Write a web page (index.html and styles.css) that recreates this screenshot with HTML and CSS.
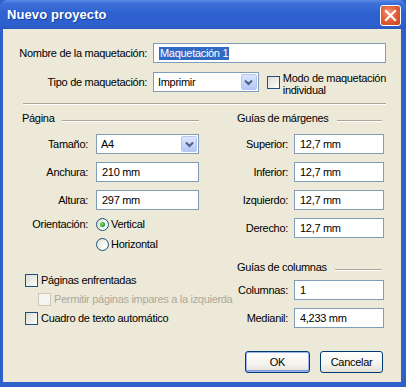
FILE: index.html
```html
<!DOCTYPE html>
<html lang="es">
<head>
<meta charset="utf-8">
<title>Nuevo proyecto</title>
<link rel="stylesheet" href="styles.css">
</head>
<body>
<div class="window">
  <div class="titlebar">
    <span class="title">Nuevo proyecto</span>
    <span class="close">
      <svg width="13" height="13" viewBox="0 0 13 13"><path d="M2 2 L11 11 M11 2 L2 11" stroke="#fff" stroke-width="2.2" stroke-linecap="square" fill="none"/></svg>
    </span>
  </div>
  <div class="client">
    <div class="top">
      <span class="lbl">Nombre de la maquetación:</span>
      <div class="field wide"><span class="hl">Maquetación 1</span></div>
      <span class="lbl">Tipo de maquetación:</span>
      <div class="row2">
        <div class="select sel-type"><span class="val">Imprimir</span><span class="dd"><svg width="9" height="7" viewBox="0 0 9 7"><path d="M1 1.5 L4.5 5 L8 1.5" stroke="#4d6185" stroke-width="2" fill="none"/></svg></span></div>
        <div class="check top-check"><span class="box"></span><span class="ctext">Modo de maquetación<br>individual</span></div>
      </div>
    </div>
    <div class="sep"></div>
    <div class="cols">
      <div class="left">
        <div class="ghead left-head"><span>Página</span><span class="gline"></span></div>
        <div class="frow"><span class="flbl">Tamaño:</span><div class="select sel-size"><span class="val">A4</span><span class="dd"><svg width="9" height="7" viewBox="0 0 9 7"><path d="M1 1.5 L4.5 5 L8 1.5" stroke="#4d6185" stroke-width="2" fill="none"/></svg></span></div></div>
        <div class="frow"><span class="flbl">Anchura:</span><div class="field w103">210 mm</div></div>
        <div class="frow"><span class="flbl">Altura:</span><div class="field w103">297 mm</div></div>
        <div class="rrow first"><span class="flbl">Orientación:</span><span class="radio on"></span><span class="rtext">Vertical</span></div>
        <div class="rrow"><span class="flbl"></span><span class="radio"></span><span class="rtext">Horizontal</span></div>
        <div class="crow c1"><span class="box"></span><span class="ctext">Páginas enfrentadas</span></div>
        <div class="crow c2 disabled"><span class="box"></span><span class="ctext">Permitir páginas impares a la izquierda</span></div>
        <div class="crow c3"><span class="box"></span><span class="ctext">Cuadro de texto automático</span></div>
      </div>
      <div class="right">
        <div class="ghead right-head"><span>Guías de márgenes</span><span class="gline"></span></div>
        <div class="frow"><span class="rlbl">Superior:</span><div class="field w90">12,7 mm</div></div>
        <div class="frow"><span class="rlbl">Inferior:</span><div class="field w90">12,7 mm</div></div>
        <div class="frow"><span class="rlbl">Izquierdo:</span><div class="field w90">12,7 mm</div></div>
        <div class="frow"><span class="rlbl">Derecho:</span><div class="field w90">12,7 mm</div></div>
        <div class="ghead right-head second"><span>Guías de columnas</span><span class="gline"></span></div>
        <div class="frow"><span class="rlbl">Columnas:</span><div class="field w90">1</div></div>
        <div class="frow"><span class="rlbl">Medianil:</span><div class="field w90">4,233 mm</div></div>
      </div>
    </div>
    <div class="buttons">
      <div class="btn default"><span>OK</span></div>
      <div class="btn cancel"><span>Cancelar</span></div>
    </div>
  </div>
</div>
</body>
</html>
```
FILE: styles.css
```css
html, body {
  margin: 0;
  padding: 0;
  width: 406px;
  height: 387px;
  overflow: hidden;
}
body {
  font-family: "Liberation Sans", Arial, sans-serif;
  font-size: 11px;
  letter-spacing: -0.3px;
  color: #000;
  white-space: nowrap;
}
.window {
  width: 406px;
  height: 387px;
  background: #2f5fc9;
  display: flex;
  flex-direction: column;
}
.titlebar {
  height: 29px;
  flex: none;
  display: flex;
  align-items: center;
  justify-content: space-between;
  background: linear-gradient(to bottom, #5a8ae6 0%, #3b6fd8 12%, #2f62d0 45%, #2d60ce 85%, #2a59c0 100%);
  border-radius: 7px 7px 0 0;
  padding: 0 5px 0 7px;
  box-sizing: border-box;
}
.title {
  color: #fff;
  font-weight: bold;
  font-size: 13px;
  letter-spacing: 0.1px;
  text-shadow: 1px 1px 0 #1a3f99;
}
.close {
  width: 21px;
  height: 21px;
  box-sizing: border-box;
  border: 1px solid #fff;
  border-radius: 3px;
  background: radial-gradient(circle at 40% 35%, #f29b7d 0%, #e0603a 45%, #c9431f 100%);
  display: flex;
  align-items: center;
  justify-content: center;
  margin-top: 1px;
}
.client {
  flex: 1;
  margin: 0 5px 5px 3px;
  background: #ece9d8;
  display: flex;
  flex-direction: column;
}
.top {
  display: grid;
  grid-template-columns: 144px 233px;
  grid-template-rows: 20px 20px;
  column-gap: 6px;
  row-gap: 9px;
  padding-top: 14px;
  align-items: center;
}
.lbl {
  text-align: right;
}
.field {
  height: 20px;
  box-sizing: border-box;
  border: 1px solid #7f9db9;
  background: #fff;
  display: flex;
  align-items: center;
  padding: 0 5px;
}
.hl {
  background: #316ac5;
  color: #fff;
  line-height: 13px;
  padding: 0 1px;
}
.w103 { width: 103px; }
.w90 { width: 90px; }
.row2 {
  display: flex;
  align-items: center;
  height: 20px;
}
.select {
  height: 20px;
  box-sizing: border-box;
  border: 1px solid #7f9db9;
  background: #fff;
  display: flex;
  align-items: center;
  justify-content: space-between;
  padding: 1px 1px 1px 3px;
}
.sel-type { width: 107px; }
.sel-size { width: 103px; }
.select .val { padding-left: 1px; }
.dd {
  width: 16px;
  height: 16px;
  box-sizing: border-box;
  border: 1px solid #b6c7ef;
  border-radius: 2px;
  background: linear-gradient(to bottom, #dce6fd 0%, #c6d6fb 50%, #b4c7f5 100%);
  display: flex;
  align-items: center;
  justify-content: center;
}
.check {
  display: flex;
  align-items: center;
}
.top-check {
  margin-left: 8px;
  height: 20px;
}
.box {
  width: 13px;
  height: 13px;
  box-sizing: border-box;
  border: 1px solid #1c5180;
  background: linear-gradient(135deg, #dcdcd7 0%, #f0f0ea 60%, #ffffff 100%);
  flex: none;
}
.ctext {
  margin-left: 3px;
  line-height: 12px;
}
.top-check .ctext {
  line-height: 12px;
  margin-top: 4px;
}
.sep {
  margin: 11px 0 0 20px;
  width: 363px;
  border-top: 1px solid #aca899;
  border-bottom: 1px solid #fff;
}
.cols {
  display: flex;
}
.left {
  width: 217px;
  display: flex;
  flex-direction: column;
}
.right {
  flex: 1;
  display: flex;
  flex-direction: column;
}
.ghead {
  height: 14px;
  display: flex;
  align-items: center;
  margin-top: 6px;
  margin-bottom: 9px;
}
.left-head {
  margin-left: 19px;
  width: 177px;
}
.right-head {
  margin-left: 17px;
  width: 145px;
}
.right-head.second {
  margin-top: 14px;
  margin-bottom: 6px;
}
.gline {
  flex: 1;
  height: 0;
  border-top: 1px solid #aca899;
  border-bottom: 1px solid #fff;
  margin-left: 8px;
  margin-top: 6px;
}
.frow {
  display: flex;
  align-items: center;
  height: 20px;
  margin-bottom: 8px;
}
.flbl {
  width: 85px;
  text-align: right;
  margin-right: 8px;
  flex: none;
}
.rlbl {
  width: 68px;
  text-align: right;
  margin-right: 6px;
  flex: none;
}
.rrow {
  display: flex;
  align-items: center;
  height: 16px;
  margin-top: 4px;
}
.rrow.first {
  margin-top: -2px;
}
.radio {
  width: 13px;
  height: 13px;
  box-sizing: border-box;
  border: 1px solid #1c5180;
  border-radius: 50%;
  background: radial-gradient(circle at 70% 70%, #ffffff 0%, #f0f0ea 50%, #d8d8d1 100%);
  flex: none;
  display: flex;
  align-items: center;
  justify-content: center;
}
.radio.on::after {
  content: "";
  width: 5px;
  height: 5px;
  border-radius: 50%;
  background: radial-gradient(circle at 40% 40%, #8ee08e 0%, #21a121 60%, #1a8a1a 100%);
}
.rtext {
  margin-left: 2px;
}
.crow {
  display: flex;
  align-items: center;
  height: 16px;
}
.crow.c1 { margin-top: 20px; margin-left: 22px; }
.crow.c2 { margin-top: 3px; margin-left: 35px; }
.crow.c3 { margin-top: 3px; margin-left: 22px; }
.crow .ctext { margin-left: 3px; }
.disabled .box {
  border-color: #cac8bb;
  background: #f6f5f0;
}
.disabled .ctext {
  color: #aca899;
}
.buttons {
  display: flex;
  justify-content: flex-end;
  margin-top: 15px;
  padding-right: 18px;
  gap: 10px;
}
.btn {
  height: 22px;
  box-sizing: border-box;
  border: 1px solid #003c74;
  border-radius: 3px;
  background: linear-gradient(to bottom, #ffffff 0%, #f4f3ee 60%, #e3e1d6 100%);
  display: flex;
  align-items: center;
  justify-content: center;
}
.btn.default {
  width: 65px;
  box-shadow: inset 0 0 0 1px #9db5ef, inset 0 -1px 0 1px #7c99e0;
}
.btn.cancel {
  width: 63px;
}
```
